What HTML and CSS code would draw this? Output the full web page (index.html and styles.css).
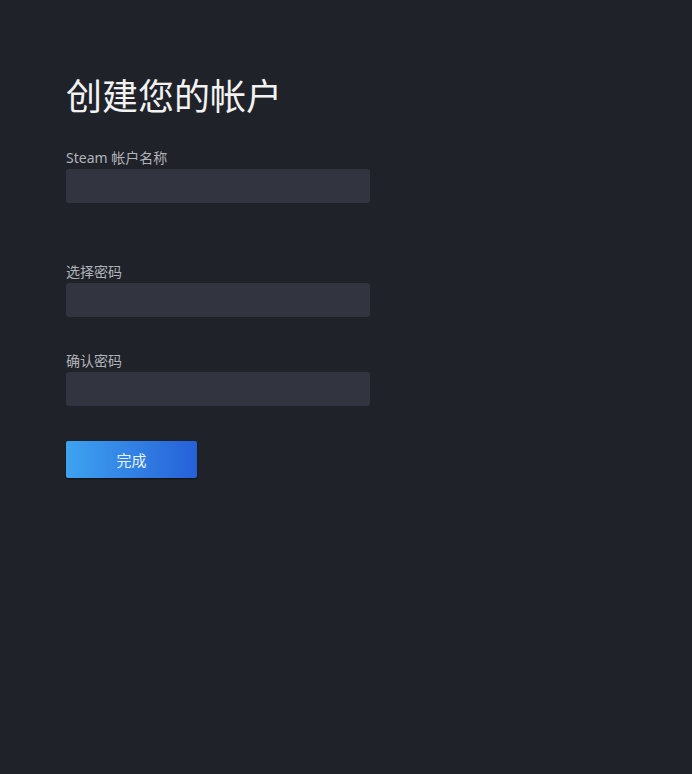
FILE: index.html
```html
<!DOCTYPE html>
<html lang="zh-CN">
<head>
<meta charset="utf-8">
<title>创建您的帐户</title>
<link rel="stylesheet" href="styles.css">
</head>
<body>
<main class="page">
  <h1 class="title">创建您的帐户</h1>
  <form class="form">
    <div class="field field-name">
      <label class="label">Steam 帐户名称</label>
      <div class="input"></div>
    </div>
    <div class="field field-pass">
      <label class="label">选择密码</label>
      <div class="input"></div>
    </div>
    <div class="field field-confirm">
      <label class="label">确认密码</label>
      <div class="input"></div>
    </div>
    <button type="button" class="btn">完成</button>
  </form>
</main>
</body>
</html>
```

FILE: styles.css
```css
html, body {
  margin: 0;
  padding: 0;
  background: #202229;
  height: 100%;
}
body {
  font-family: "Noto Sans", "Noto Sans CJK SC", sans-serif;
  color: #ffffff;
}
.page {
  padding: 76px 0 0 66px;
}
.title {
  margin: 0;
  font-size: 36px;
  line-height: 36px;
  font-weight: 400;
  color: #f2f2f2;
  font-family: "Noto Sans CJK SC", sans-serif;
}
.form {
  display: flex;
  flex-direction: column;
  align-items: flex-start;
}
.field {
  display: flex;
  flex-direction: column;
}
.field-name { margin-top: 38px; }
.field-pass { margin-top: 61px; }
.field-confirm { margin-top: 36px; }
.label {
  font-size: 14px;
  line-height: 16px;
  height: 16px;
  color: #b0b4ba;
  margin-bottom: 3px;
}
.input {
  width: 304px;
  height: 34px;
  background: #32353f;
  border-radius: 3px;
}
.btn {
  margin-top: 35px;
  width: 131px;
  height: 37px;
  border: none;
  border-radius: 2px;
  background: linear-gradient(90deg, #3ea3f0 0%, #2660d8 100%);
  color: #e6f3ff;
  font-family: "Noto Sans CJK SC", sans-serif;
  font-size: 15px;
  padding: 0;
  box-shadow: 0 1px 2px rgba(0, 0, 0, 0.5);
}
```
